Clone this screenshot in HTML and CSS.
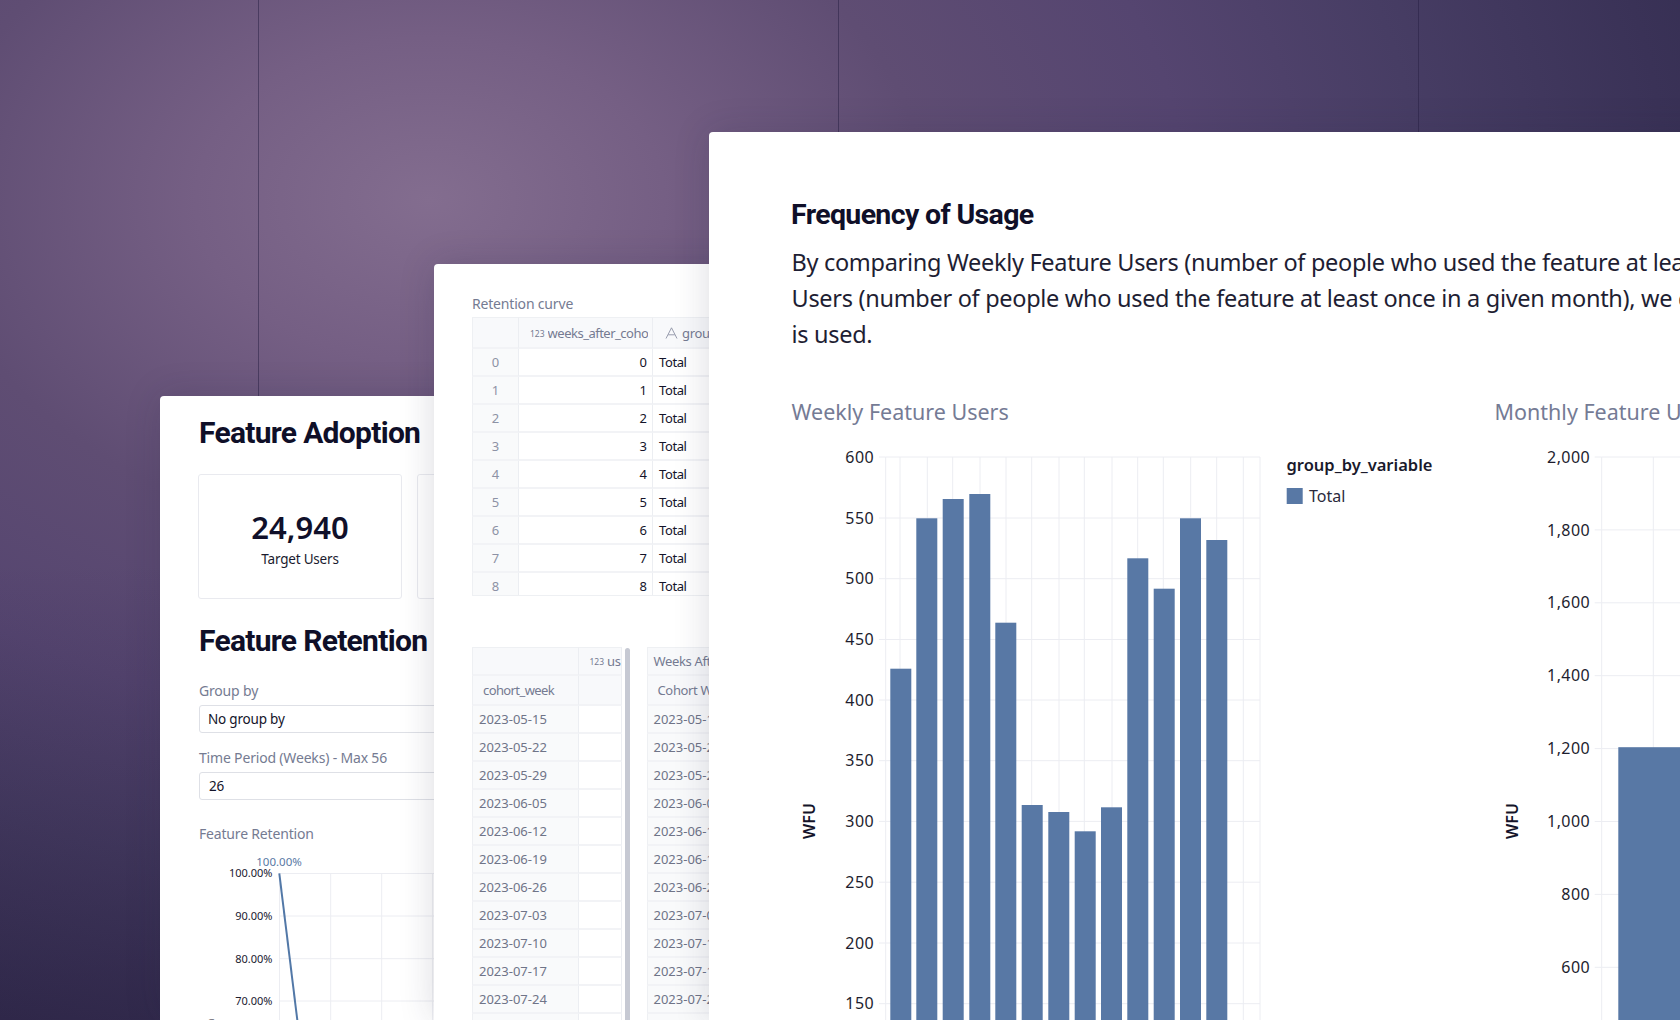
FILE: index.html
```html
<!DOCTYPE html>
<html lang="en">
<head>
<meta charset="utf-8">
<title>Feature Adoption</title>
<link rel="stylesheet" href="styles.css">
</head>
<body>
<main class="desktop">

<section class="window window-adoption">
  <h2 class="heading">Feature Adoption</h2>
  <div class="stats">
    <div class="stat"><div class="stat-value">24,940</div><div class="stat-label">Target Users</div></div>
    <div class="stat"></div>
  </div>
  <h2 class="heading heading-retention">Feature Retention</h2>
  <div class="field-label field-first">Group by</div>
  <div class="control">No group by</div>
  <div class="field-label field-next">Time Period (Weeks) - Max 56</div>
  <div class="control control-number">26</div>
  <div class="field-label field-chart">Feature Retention</div>
  <svg class="retention-chart" width="240" height="170" viewBox="0 0 240 170">
    <path class="grid" d="M81.5 23.5H240M81.5 66H240M81.5 108.7H240M81.5 151H240M81.5 23.5V170M132.7 23.5V170M183.7 23.5V170M234.7 23.5V170"/>
    <text class="peak-label" x="81" y="16">100.00%</text>
    <text class="small-tick" x="74.5" y="27">100.00%</text>
    <text class="small-tick" x="74.5" y="70">90.00%</text>
    <text class="small-tick" x="74.5" y="112.5">80.00%</text>
    <text class="small-tick" x="74.5" y="155">70.00%</text>
    <text class="small-title" x="16" y="219" transform="rotate(-90 16 219)">Retention</text>
    <path class="retention-line" d="M81.3 23.3L99.3 170"/>
  </svg>
</section>

<section class="window window-tables">
  <div class="field-label">Retention curve</div>
  <div class="table-clip table-clip-curve">
    <table class="data curve">
      <colgroup><col class="c-index"><col class="c-weeks"><col class="c-group"></colgroup>
      <thead><tr>
        <th></th>
        <th><span class="type-num">123</span><span class="head-clip head-weeks">weeks_after_cohort</span></th>
        <th><svg class="type-text" width="13" height="12" viewBox="0 0 13 12"><path d="M1 11.5L6.5 .8L12 11.5M3.2 7.8H9.8"/></svg><span class="head-text">group</span></th>
      </tr></thead>
      <tbody>
        <tr><td class="idx">0</td><td class="num">0</td><td class="txt">Total</td></tr>
        <tr><td class="idx">1</td><td class="num">1</td><td class="txt">Total</td></tr>
        <tr><td class="idx">2</td><td class="num">2</td><td class="txt">Total</td></tr>
        <tr><td class="idx">3</td><td class="num">3</td><td class="txt">Total</td></tr>
        <tr><td class="idx">4</td><td class="num">4</td><td class="txt">Total</td></tr>
        <tr><td class="idx">5</td><td class="num">5</td><td class="txt">Total</td></tr>
        <tr><td class="idx">6</td><td class="num">6</td><td class="txt">Total</td></tr>
        <tr><td class="idx">7</td><td class="num">7</td><td class="txt">Total</td></tr>
        <tr><td class="idx">8</td><td class="num">8</td><td class="txt">Total</td></tr>
      </tbody>
    </table>
  </div>
  <div class="cohorts">
    <table class="data cohort">
      <colgroup><col class="c-date"><col class="c-users"></colgroup>
      <thead>
        <tr><th></th><th><span class="type-num">123</span><span class="head-text">us</span></th></tr>
        <tr><th class="col-name">cohort_week</th><th></th></tr>
      </thead>
      <tbody>
        <tr><td class="date">2023-05-15</td><td></td></tr>
        <tr><td class="date">2023-05-22</td><td></td></tr>
        <tr><td class="date">2023-05-29</td><td></td></tr>
        <tr><td class="date">2023-06-05</td><td></td></tr>
        <tr><td class="date">2023-06-12</td><td></td></tr>
        <tr><td class="date">2023-06-19</td><td></td></tr>
        <tr><td class="date">2023-06-26</td><td></td></tr>
        <tr><td class="date">2023-07-03</td><td></td></tr>
        <tr><td class="date">2023-07-10</td><td></td></tr>
        <tr><td class="date">2023-07-17</td><td></td></tr>
        <tr><td class="date">2023-07-24</td><td></td></tr>
        <tr><td class="date">2023-07-31</td><td></td></tr>
      </tbody>
    </table>
    <div class="scrollbar"></div>
    <table class="data pivot">
      <colgroup><col class="c-date"><col class="c-users"></colgroup>
      <thead>
        <tr><th class="pivot-head">Weeks After</th><th></th></tr>
        <tr><th class="pivot-name">Cohort Week</th><th></th></tr>
      </thead>
      <tbody>
        <tr><td class="date">2023-05-15</td><td></td></tr>
        <tr><td class="date">2023-05-22</td><td></td></tr>
        <tr><td class="date">2023-05-29</td><td></td></tr>
        <tr><td class="date">2023-06-05</td><td></td></tr>
        <tr><td class="date">2023-06-12</td><td></td></tr>
        <tr><td class="date">2023-06-19</td><td></td></tr>
        <tr><td class="date">2023-06-26</td><td></td></tr>
        <tr><td class="date">2023-07-03</td><td></td></tr>
        <tr><td class="date">2023-07-10</td><td></td></tr>
        <tr><td class="date">2023-07-17</td><td></td></tr>
        <tr><td class="date">2023-07-24</td><td></td></tr>
        <tr><td class="date">2023-07-31</td><td></td></tr>
      </tbody>
    </table>
  </div>
</section>

<section class="window window-frequency">
  <h2 class="heading heading-frequency">Frequency of Usage</h2>
  <p class="lead">By comparing Weekly Feature Users (number of people who used the feature at least once in a given week) with Monthly Feature<br>Users (number of people who used the feature at least once in a given month), we can understand how often the feature<br>is used.</p>
  <div class="charts">
    <figure class="chart chart-weekly">
      <figcaption class="chart-title">Weekly Feature Users</figcaption>
      <svg width="703" height="600" viewBox="0 0 703 600">
        <path class="grid" d="M95.7 27H470M95.7 88H470M95.7 148.7H470M95.7 209.5H470M95.7 270H470M95.7 330.7H470M95.7 391.4H470M95.7 452.2H470M95.7 513H470M95.7 573.7H470"/>
        <path class="grid" d="M95.7 27V600M110 27V600M137.3 27V600M162.7 27V600M190 27V600M216 27V600M241.7 27V600M269 27V600M294.3 27V600M322 27V600M347.7 27V600M373.3 27V600M400.7 27V600M426.7 27V600M453.3 27V600M470 27V600"/>
        <path class="tick" d="M89 27H95.7M89 88H95.7M89 148.7H95.7M89 209.5H95.7M89 270H95.7M89 330.7H95.7M89 391.4H95.7M89 452.2H95.7M89 513H95.7M89 573.7H95.7"/>
        <rect class="bar" x="100.3" y="238.7" width="21" height="361.3"/>
        <rect class="bar" x="126.3" y="88.3" width="21" height="511.7"/>
        <rect class="bar" x="152.7" y="69" width="21" height="531"/>
        <rect class="bar" x="179.3" y="64" width="21" height="536"/>
        <rect class="bar" x="205.3" y="192.7" width="21" height="407.3"/>
        <rect class="bar" x="231.7" y="375" width="21" height="225"/>
        <rect class="bar" x="258.3" y="382" width="21" height="218"/>
        <rect class="bar" x="284.7" y="401.3" width="21" height="198.7"/>
        <rect class="bar" x="311" y="377.3" width="21" height="222.7"/>
        <rect class="bar" x="337.3" y="128.3" width="21" height="471.7"/>
        <rect class="bar" x="363.7" y="158.7" width="21" height="441.3"/>
        <rect class="bar" x="390" y="88.3" width="21" height="511.7"/>
        <rect class="bar" x="416.3" y="110" width="21" height="490"/>
        <text class="axis-tick" x="84" y="32.6">600</text>
        <text class="axis-tick" x="84" y="93.6">550</text>
        <text class="axis-tick" x="84" y="154.3">500</text>
        <text class="axis-tick" x="84" y="215.1">450</text>
        <text class="axis-tick" x="84" y="275.6">400</text>
        <text class="axis-tick" x="84" y="336.3">350</text>
        <text class="axis-tick" x="84" y="397">300</text>
        <text class="axis-tick" x="84" y="457.8">250</text>
        <text class="axis-tick" x="84" y="518.6">200</text>
        <text class="axis-tick" x="84" y="579.3">150</text>
        <text class="axis-title" x="19" y="391" transform="rotate(-90 19 391)">WFU</text>
        <text class="legend-title" x="496.5" y="40.5">group_by_variable</text>
        <rect class="bar" x="496.7" y="58" width="16" height="16"/>
        <text class="legend-item" x="519" y="71.5">Total</text>
      </svg>
    </figure>
    <figure class="chart chart-monthly">
      <figcaption class="chart-title">Monthly Feature Users</figcaption>
      <svg width="200" height="600" viewBox="0 0 200 600">
        <path class="grid" d="M108.7 27H200M108.7 99.9H200M108.7 172.8H200M108.7 245.7H200M108.7 318.6H200M108.7 391.5H200M108.7 464.4H200M108.7 537.3H200M108.7 27V600M160.3 27V600"/>
        <path class="tick" d="M101.7 27H108.7M101.7 99.9H108.7M101.7 172.8H108.7M101.7 245.7H108.7M101.7 318.6H108.7M101.7 391.5H108.7M101.7 464.4H108.7M101.7 537.3H108.7"/>
        <rect class="bar" x="125.3" y="317.2" width="80" height="283"/>
        <text class="axis-tick" x="97" y="32.6">2,000</text>
        <text class="axis-tick" x="97" y="105.5">1,800</text>
        <text class="axis-tick" x="97" y="178.4">1,600</text>
        <text class="axis-tick" x="97" y="251.3">1,400</text>
        <text class="axis-tick" x="97" y="324.2">1,200</text>
        <text class="axis-tick" x="97" y="397.1">1,000</text>
        <text class="axis-tick" x="97" y="470">800</text>
        <text class="axis-tick" x="97" y="542.9">600</text>
        <text class="axis-title" x="19" y="391" transform="rotate(-90 19 391)">WFU</text>
      </svg>
    </figure>
  </div>
</section>

</main>
</body>
</html>
```
FILE: styles.css
```css
* { box-sizing: border-box; }

html, body {
  margin: 0;
  height: 100%;
  overflow: hidden;
}

body {
  font-family: "Noto Sans", "Open Sans", sans-serif;
  color: #12122a;
}

.desktop {
  position: relative;
  width: 1680px;
  height: 1020px;
  overflow: hidden;
  background-color: #30284a;
  background-image:
    linear-gradient(90deg, rgba(38, 30, 66, .5) 0 1px, transparent 1px),
    linear-gradient(180deg, transparent 55%, rgba(24, 17, 44, .3) 100%),
    radial-gradient(ellipse 1300px 900px at 430px 200px, #836d8f 0%, #755f84 18%, #5f4d73 38%, #554570 58%, #473d64 76%, #3a3257 95%, #373054 100%);
  background-size: 580px 100%, 100% 100%, 100% 100%;
  background-position: 258px 0, 0 0, 0 0;
  background-repeat: repeat-x, no-repeat, no-repeat;
}

/* the three stacked windows on the canvas */
.window {
  position: absolute;
  background: #fff;
  border-radius: 4px 4px 0 0;
  box-shadow: 0 0 36px rgba(28, 28, 60, .16);
  overflow: hidden;
}

.window-adoption {
  left: 160px;
  top: 396px;
  width: 620px;
  height: 624px;
  padding: 17px 0 0 38px;
}

.window-tables {
  left: 434px;
  top: 264px;
  width: 620px;
  height: 756px;
  padding: 30px 0 0 38px;
}

.window-frequency {
  left: 709px;
  top: 132px;
  width: 1100px;
  height: 888px;
  padding: 63px 0 0 81px;
}

.heading {
  margin: 0 0 0 1px;
  font-family: Roboto, "Noto Sans", sans-serif;
  font-size: 30px;
  line-height: 40px;
  font-weight: 700;
  letter-spacing: -.7px;
  white-space: nowrap;
  color: #0f0f28;
}

.heading-retention { margin-top: 22px; }

.heading-frequency {
  font-size: 28.5px;
  letter-spacing: -.65px;
}

.stats {
  display: flex;
  gap: 15px;
  margin-top: 21px;
}

.stat {
  flex: 0 0 204px;
  height: 125px;
  padding-top: 32px;
  border: 1px solid #e9eaef;
  border-radius: 3px;
  text-align: center;
}

.stat-value {
  font-size: 31px;
  line-height: 40px;
  font-weight: 600;
  color: #10102a;
}

.stat-label {
  margin-top: 2px;
  font-size: 13.5px;
  line-height: 20px;
  letter-spacing: -.2px;
  color: #1a1a2e;
}

.field-label {
  font-size: 14px;
  line-height: 20px;
  letter-spacing: -.18px;
  color: #757b92;
  white-space: nowrap;
}

.window-adoption .field-label { margin-left: 1px; }
.window-adoption .field-first { margin-top: 20px; }
.window-adoption .field-next { margin-top: 15px; }
.window-adoption .field-chart { margin-top: 24px; }

.control {
  width: 500px;
  height: 28px;
  margin-top: 4px;
  margin-left: 1px;
  padding-left: 8px;
  border: 1px solid #dee0e6;
  border-radius: 3px;
  font-size: 13.5px;
  line-height: 26px;
  letter-spacing: -.2px;
  color: #14142a;
}

.control-number { padding-left: 9px; }

.retention-chart {
  display: block;
  margin-top: 6px;
}

.grid {
  fill: none;
  stroke: #ecedf2;
  stroke-width: 1;
}

.tick {
  fill: none;
  stroke: #ecedf2;
  stroke-width: 1;
}

.peak-label {
  font-size: 11.5px;
  text-anchor: middle;
  fill: #5a79a5;
}

.small-tick {
  font-size: 11px;
  text-anchor: end;
  fill: #20202f;
}

.small-title {
  font-size: 11px;
  fill: #20202f;
}

.retention-line {
  fill: none;
  stroke: #5278a7;
  stroke-width: 2;
}

/* tables */
.table-clip-curve {
  width: 340px;
  height: 279px;
  margin-top: 3px;
  overflow: hidden;
  border-bottom: 1px solid #eef0f3;
}

.data {
  table-layout: fixed;
  border-collapse: separate;
  border-spacing: 0;
  font-size: 13px;
  color: #14142a;
}

.curve { width: 301px; }
.c-index { width: 47px; }
.c-weeks { width: 134px; }
.c-group { width: 120px; }
.c-date { width: 106.5px; }
.c-users { width: 43px; }

.data th,
.data td {
  height: 28px;
  padding: 0;
  font-weight: 400;
  white-space: nowrap;
  overflow: hidden;
  border-right: 1px solid #eceef2;
  border-bottom: 2px solid #f2f3f6;
}

.curve th { height: 32px; }

.data th {
  background: #f8f9fb;
  color: #757b92;
  text-align: left;
  letter-spacing: -.35px;
}

.data tr > :first-child { border-left: 1px solid #eef0f3; }
.data thead tr:first-child th { border-top: 1px solid #eef0f3; }

.idx {
  background: #f9fafb;
  color: #8d92a5;
  text-align: center;
}

.num {
  padding-right: 5px !important;
  text-align: right;
}

.txt {
  padding-left: 6px !important;
  letter-spacing: -.4px;
}

.type-num {
  display: inline-block;
  margin-left: 11px;
  margin-right: 3px;
  font-size: 8.5px;
  letter-spacing: 0;
  vertical-align: 1px;
  color: #757b92;
}

.head-clip {
  display: inline-block;
  width: 100px;
  overflow: hidden;
  vertical-align: bottom;
  letter-spacing: -.5px;
}

.type-text {
  margin-left: 12px;
  margin-right: 4px;
  vertical-align: -1px;
}

.type-text path {
  fill: none;
  stroke: #8d92a5;
  stroke-width: .9;
}

.head-text { color: #757b92; }

.cohorts {
  display: flex;
  align-items: flex-start;
  margin-top: 51px;
}

.cohort,
.pivot {
  width: 149.5px;
  flex: none;
}

.date {
  padding-left: 6px !important;
  background: #f9fafb;
  color: #6f7488;
}

.cohort th,
.pivot th { height: 29px; }

.cohort thead tr + tr th,
.pivot thead tr + tr th { height: 29.5px; }

.col-name { padding-left: 10px !important; letter-spacing: -.6px !important; }
.pivot-head { padding-left: 6px !important; }
.pivot-name { padding-left: 10px !important; }

.scrollbar {
  flex: none;
  width: 5px;
  height: 380px;
  margin: 1px 17px 0 3px;
  border-radius: 3px 3px 0 0;
  background: #c6c9d3;
}

/* frequency window */
.lead {
  margin: 9px 0 0 1.5px;
  font-size: 23.5px;
  line-height: 36px;
  letter-spacing: -.3px;
  white-space: nowrap;
  color: #1e1e33;
}

.charts {
  display: flex;
  margin-top: 44.5px;
}

.chart { margin: 0; flex: none; }
.chart-weekly { width: 703px; }
.chart-monthly { width: 200px; }

.chart svg {
  display: block;
  margin-top: 3.5px;
  overflow: visible;
}

.chart-title {
  margin-left: 1.5px;
  font-size: 21.5px;
  line-height: 30px;
  color: #757b95;
  white-space: nowrap;
}

.bar { fill: #5878a5; }

.axis-tick {
  font-size: 16px;
  letter-spacing: .4px;
  text-anchor: end;
  fill: #1d1d2e;
}

.axis-title {
  font-size: 16px;
  font-weight: 600;
  text-anchor: middle;
  dominant-baseline: central;
  fill: #14142a;
}

.legend-title {
  font-size: 16.5px;
  font-weight: 600;
  fill: #1a1a2c;
}

.legend-item {
  font-size: 16px;
  fill: #2a2a3c;
}
```
